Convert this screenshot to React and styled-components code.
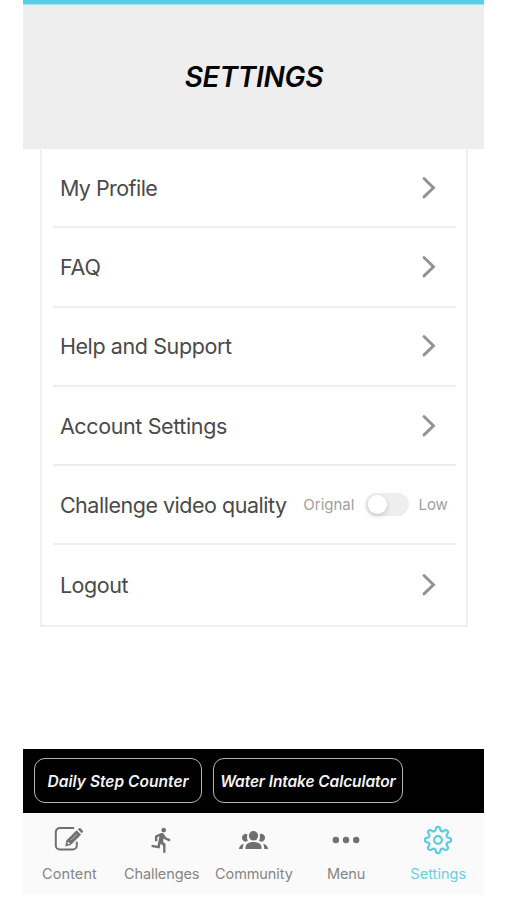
import React from "react";
import styled, { createGlobalStyle } from "styled-components";
import { MdDirectionsRun } from "react-icons/md";

const GlobalStyle = createGlobalStyle`
  * { box-sizing: border-box; }
  body {
    margin: 0;
    background: #fff;
    font-family: Inter, "Liberation Sans", sans-serif;
    overflow: hidden;
  }
`;

const Screen = styled.div`
  width: 461px;
  height: 900px;
  margin-left: 23.4px;
  display: flex;
  flex-direction: column;
`;

const StatusStrip = styled.div`
  height: 5px;
  flex: none;
  background: #54cfe9;
  border-bottom: 1px solid #a8e0ec;
`;

const Header = styled.header`
  height: 144px;
  flex: none;
  display: flex;
  align-items: center;
  justify-content: center;
  background: #eeeeee;
`;

const Title = styled.h1`
  margin: 0;
  font-size: 28px;
  line-height: 34px;
  font-weight: 600;
  font-style: italic;
  letter-spacing: -0.25px;
  color: #050505;
`;

const Card = styled.main`
  width: 428px;
  height: 478px;
  flex: none;
  margin: 0 auto;
  padding: 0 10px 0 11px;
  border: 2px solid #f0f0f0;
  border-top: 0;
`;

const Row = styled.div`
  height: 79.3px;
  display: flex;
  align-items: center;
  justify-content: space-between;
  padding: 0 19px 0 7px;
  border-bottom: 2px solid #eeeeee;

  &:last-child { border-bottom: 0; }
`;

const RowLabel = styled.span`
  font-size: 21.5px;
  line-height: 26px;
  letter-spacing: ${(p) => p.$spacing}px;
  color: #4a4a4a;
  white-space: nowrap;
`;

const Chevron = styled.svg`
  width: 16px;
  height: 24px;
  fill: none;
  stroke: #929292;
  stroke-width: 2.9;
  stroke-linecap: round;
`;

const Quality = styled.div`
  display: flex;
  align-items: center;
  margin-right: -11px;
  font-size: 15px;
  color: #a0a0a0;
`;

const Track = styled.div`
  width: 44px;
  height: 23px;
  margin: 0 9px 0 11px;
  padding: 2px 3px;
  border-radius: 12px;
  background: #eeeeee;
`;

const Thumb = styled.div`
  width: 19px;
  height: 19px;
  border-radius: 50%;
  background: #fff;
  box-shadow: 0 2px 5px rgba(0, 0, 0, 0.18);
`;

const Tools = styled.section`
  height: 64px;
  flex: none;
  margin-top: 122px;
  padding: 9px 11px 0;
  display: flex;
  gap: 11px;
  background: #000;
`;

const ToolButton = styled.button`
  width: ${(p) => p.$width}px;
  height: 45px;
  padding: 2px 0 0;
  border: 1.5px solid #b5b5b5;
  border-radius: 11px;
  background: #000;
  color: #f4f4f4;
  font: italic 600 15.5px/20px Inter, "Liberation Sans", sans-serif;
  letter-spacing: ${(p) => p.$spacing}px;
  white-space: nowrap;
`;

const TabBar = styled.nav`
  height: 82px;
  flex: none;
  display: grid;
  grid-template-columns: repeat(5, 1fr);
  background: #fafafa;
`;

const Tab = styled.a`
  display: flex;
  flex-direction: column;
  align-items: center;
  padding-top: 11px;
  color: ${(p) => (p.$active ? "#5acbe2" : "#707070")};
`;

const TabIcon = styled.span`
  height: 32px;
  display: flex;
  align-items: center;
`;

const TabLabel = styled.span`
  margin-top: 9px;
  font-size: 14.5px;
  line-height: 18px;
  letter-spacing: ${(p) => p.$spacing}px;
  color: ${(p) => (p.$active ? "#6acfe4" : "#858585")};
`;

const ComposeIcon = () => (
  <svg width="32" height="28" viewBox="0.7 2 32 28" fill="none">
    <path d="M21 4H7.500A4 4 0 0 0 3.500 8V21.500A4 4 0 0 0 7.500 25.500H20.500A4 4 0 0 0 24.500 21.500V18.500" stroke="currentColor" strokeWidth="2" strokeLinecap="round" />
    <path d="M14.500 16.500L24.300 6.700L28.300 10.700L18.600 20.500L13.500 22Z" fill="currentColor" stroke="currentColor" strokeWidth="0.8" strokeLinejoin="round" />
    <path d="M25.500 5.300L26.500 4.400Q27.500 3.600 28.500 4.500L30.300 6.400Q31.200 7.300 30.300 8.300L29.400 9.300Z" fill="currentColor" />
    <path d="M18.500 16.200L24.500 10.200" stroke="#b5b5b5" strokeWidth="1" />
    <path d="M15.600 17.500L17.800 19.700L15.200 20.300Z" fill="#ededed" />
  </svg>
);

const GroupIcon = () => (
  <svg width="32" height="28" viewBox="0.5 -0.5 32 28" fill="currentColor">
    <ellipse cx="16" cy="9.300" rx="4.600" ry="4.800" />
    <path d="M8 22.500V21C8 17.800 11 15.600 16 15.600S24 17.800 24 21V22.500Z" />
    <path d="M9.800 7.900A3.600 3.800 0 1 0 10.300 14.300Q8.900 11.500 9.800 7.900Z" />
    <path d="M22.200 7.900A3.600 3.800 0 1 1 21.700 14.300Q23.100 11.500 22.200 7.900Z" />
    <path d="M1.500 22.500Q1.600 18.600 6.400 17.300Q5.300 19 5.200 22.500Z" />
    <path d="M30.500 22.500Q30.400 18.600 25.600 17.300Q26.700 19 26.800 22.500Z" />
  </svg>
);

const DotsIcon = () => (
  <svg width="32" height="28" viewBox="0 0 32 28" fill="currentColor">
    <circle cx="5.800" cy="14" r="3.200" />
    <circle cx="16" cy="14" r="3.200" />
    <circle cx="26.200" cy="14" r="3.200" />
  </svg>
);

// Outline of an eight-toothed cog, traced around its centre.
const gearPath = Array.from({ length: 160 }, (_, i) => {
  const angle = (i / 160) * Math.PI * 2;
  const wave = Math.tanh(1.5 * Math.cos(8 * angle)) / Math.tanh(1.5);
  const radius = 11.3 + 1.8 * wave;
  const x = 16 + radius * Math.sin(angle);
  const y = 16 - radius * Math.cos(angle);
  return `${i ? "L" : "M"}${x.toFixed(2)} ${y.toFixed(2)}`;
}).join("") + "Z";

const GearIcon = () => (
  <svg width="32" height="32" viewBox="0 0 32 32" fill="none" stroke="currentColor" strokeWidth="2.2" strokeLinejoin="round">
    <path d={gearPath} />
    <circle cx="16" cy="16" r="3.900" />
  </svg>
);

const LinkRow = ({ label, spacing }) => (
  <Row>
    <RowLabel $spacing={spacing}>{label}</RowLabel>
    <Chevron viewBox="0 0 16 24"><path d="M3 2.500L12.500 11.700L3 20.900" /></Chevron>
  </Row>
);

const tabs = [
  { label: "Content", icon: <ComposeIcon />, spacing: 0.1 },
  { label: "Challenges", icon: <MdDirectionsRun size={28} />, spacing: -0.1 },
  { label: "Community", icon: <GroupIcon />, spacing: -0.1 },
  { label: "Menu", icon: <DotsIcon />, spacing: -0.1 },
  { label: "Settings", icon: <GearIcon />, spacing: 0.05, active: true },
];

export default function App() {
  return (
    <>
      <GlobalStyle />
      <Screen>
        <StatusStrip />
        <Header><Title>SETTINGS</Title></Header>
        <Card>
          <LinkRow label="My Profile" spacing={-0.55} />
          <LinkRow label="FAQ" spacing={-0.1} />
          <LinkRow label="Help and Support" spacing={-0.4} />
          <LinkRow label="Account Settings" spacing={-0.38} />
          <Row>
            <RowLabel $spacing={-0.48}>Challenge video quality</RowLabel>
            <Quality>
              <span>Orignal</span>
              <Track><Thumb /></Track>
              <span>Low</span>
            </Quality>
          </Row>
          <LinkRow label="Logout" spacing={-0.45} />
        </Card>
        <Tools>
          <ToolButton $width={167.5} $spacing={0.03}>Daily Step Counter</ToolButton>
          <ToolButton $width={190} $spacing={-0.1}>Water Intake Calculator</ToolButton>
        </Tools>
        <TabBar>
          {tabs.map((tab) => (
            <Tab key={tab.label} $active={tab.active}>
              <TabIcon>{tab.icon}</TabIcon>
              <TabLabel $active={tab.active} $spacing={tab.spacing}>{tab.label}</TabLabel>
            </Tab>
          ))}
        </TabBar>
      </Screen>
    </>
  );
}
